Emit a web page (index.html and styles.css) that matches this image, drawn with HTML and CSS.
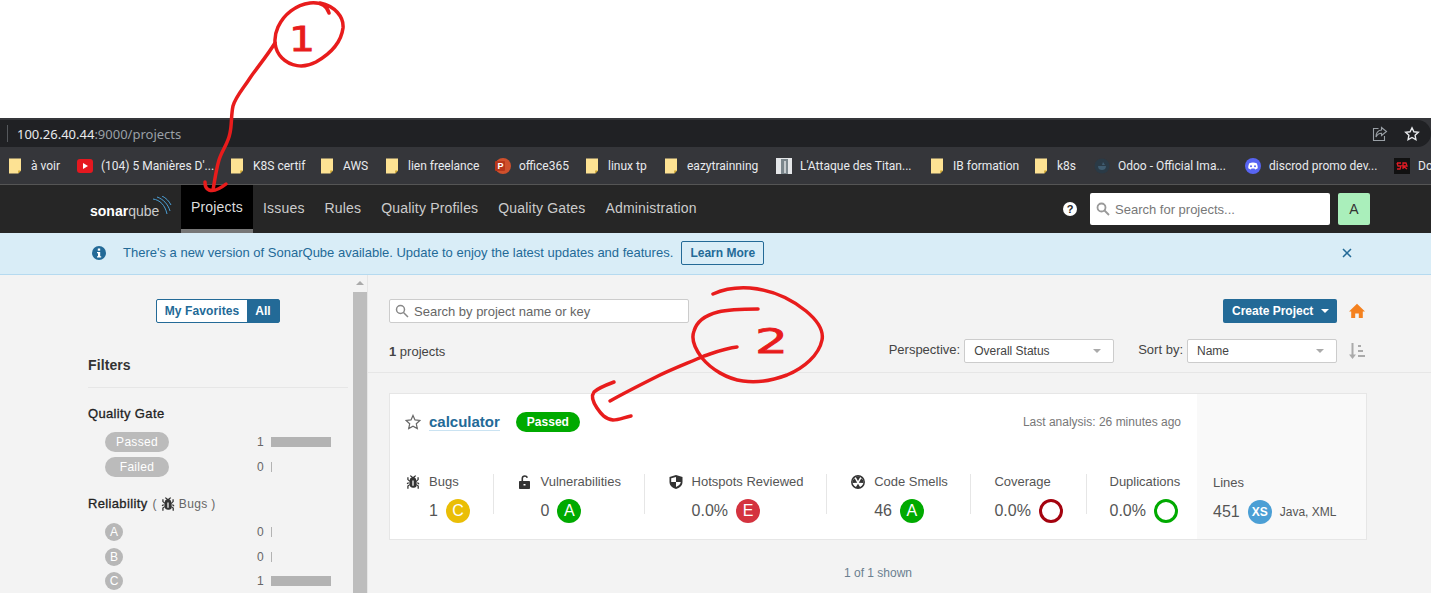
FILE: index.html
```html
<!DOCTYPE html>
<html lang="en">
<head>
  <meta charset="UTF-8">
  <title>Projects - SonarQube</title>
  <link rel="stylesheet" href="styles.css">
</head>
<body>
  <div class="top-blank"></div>

  <div class="browser">
    <div class="url-bar">
      <span class="url-text"><b>100.26.40.44</b>:9000/projects</span>
      <div class="url-actions">
        <svg width="16" height="16" viewBox="0 0 16 16" fill="none" stroke="#9aa0a6" stroke-width="1.1"><path d="M6.5 2.5H1.5v12h11V10"/><path d="M9.5 1.5l5 4-5 4V7.3C7 7.3 5.2 8.5 4 11c0-4 2-6.6 5.5-7z"/></svg>
        <svg width="16" height="16" viewBox="0 0 16 16" fill="none" stroke="#e8eaed" stroke-width="1.4"><path d="M8 1.8l1.9 4 4.4.5-3.2 3 .8 4.4L8 11.5l-3.9 2.2.8-4.4-3.2-3 4.4-.5z"/></svg>
      </div>
    </div>
    <div class="bookmarks">
      <div class="mark"><svg class="folder" viewBox="0 0 13 16"><path d="M0 0h13v13l-3 3H0z" fill="#fde293"/><path d="M13 13h-3v3z" fill="#c9a227"/></svg><span>à voir</span></div>
      <div class="mark"><svg class="fav" viewBox="0 0 16 16"><rect y="1" width="16" height="14" rx="3" fill="#e5181f"/><path d="M6 5l5 3-5 3z" fill="#fff"/></svg><span>(104) 5 Manières D'...</span></div>
      <div class="mark"><svg class="folder" viewBox="0 0 13 16"><path d="M0 0h13v13l-3 3H0z" fill="#fde293"/><path d="M13 13h-3v3z" fill="#c9a227"/></svg><span>K8S certif</span></div>
      <div class="mark"><svg class="folder" viewBox="0 0 13 16"><path d="M0 0h13v13l-3 3H0z" fill="#fde293"/><path d="M13 13h-3v3z" fill="#c9a227"/></svg><span>AWS</span></div>
      <div class="mark"><svg class="folder" viewBox="0 0 13 16"><path d="M0 0h13v13l-3 3H0z" fill="#fde293"/><path d="M13 13h-3v3z" fill="#c9a227"/></svg><span>lien freelance</span></div>
      <div class="mark"><svg class="fav" viewBox="0 0 16 16"><circle cx="8" cy="8" r="8" fill="#d0502c"/><rect y="3" width="10" height="10" rx="1" fill="#b7361a"/><text x="2.4" y="11.4" class="ppt">P</text></svg><span>office365</span></div>
      <div class="mark"><svg class="folder" viewBox="0 0 13 16"><path d="M0 0h13v13l-3 3H0z" fill="#fde293"/><path d="M13 13h-3v3z" fill="#c9a227"/></svg><span>linux tp</span></div>
      <div class="mark"><svg class="folder" viewBox="0 0 13 16"><path d="M0 0h13v13l-3 3H0z" fill="#fde293"/><path d="M13 13h-3v3z" fill="#c9a227"/></svg><span>eazytrainning</span></div>
      <div class="mark"><svg class="fav" viewBox="0 0 16 16"><rect width="16" height="16" fill="#e4e6e8"/><rect x="5" y="1" width="7" height="15" fill="#7b868c"/><rect x="8" y="3" width="2" height="12" fill="#c6cbce"/></svg><span>L'Attaque des Titan...</span></div>
      <div class="mark"><svg class="folder" viewBox="0 0 13 16"><path d="M0 0h13v13l-3 3H0z" fill="#fde293"/><path d="M13 13h-3v3z" fill="#c9a227"/></svg><span>IB formation</span></div>
      <div class="mark"><svg class="folder" viewBox="0 0 13 16"><path d="M0 0h13v13l-3 3H0z" fill="#fde293"/><path d="M13 13h-3v3z" fill="#c9a227"/></svg><span>k8s</span></div>
      <div class="mark"><svg class="fav" viewBox="0 0 16 16"><circle cx="8" cy="8" r="7.5" fill="#2a3a46"/><path d="M4 8h8c0 3-2 4-4 4s-4-1-4-4zM9 4l2 3H8z" fill="#3f5c70"/></svg><span>Odoo - Official Ima...</span></div>
      <div class="mark"><svg class="fav" viewBox="0 0 16 16"><circle cx="8" cy="8" r="8" fill="#5865f2"/><path d="M4.3 5.2c2.4-1 5-1 7.4 0 .8 1.5 1.1 3.2 1 5-.9.7-1.8 1-2.6 1.2l-.6-1H6.5l-.6 1C5.100 11.200 4.200 10.900 3.300 10.200c-.1-1.800.2-3.500 1-5z" fill="#fff"/><circle cx="6" cy="8.300" r="1" fill="#5865f2"/><circle cx="10" cy="8.300" r="1" fill="#5865f2"/></svg><span>discrod promo dev...</span></div>
      <div class="mark"><svg class="fav" viewBox="0 0 16 16"><rect width="16" height="16" fill="#111"/><path d="M3 5h4M3 5l1 3h3l-1 3H3M9 11V5h3l1 3H9l4 3" fill="none" stroke="#e01b24" stroke-width="1.300"/></svg><span>Do</span></div>
    </div>
  </div>

  <header class="nav">
    <a class="logo"><b>sonar</b><span>qube</span>
      <svg class="logo-waves" width="20" height="22" viewBox="0 0 20 22" fill="none" stroke="#4b9fd5" stroke-width="1"><path d="M1 3c7 1 12 6 14 15"/><path d="M5 1c6 2 11 7 13 14"/><path d="M10 0c4 2 7 5 9 9"/></svg>
    </a>
    <nav class="nav-links">
      <a class="nav-link active">Projects</a>
      <a class="nav-link">Issues</a>
      <a class="nav-link">Rules</a>
      <a class="nav-link">Quality Profiles</a>
      <a class="nav-link">Quality Gates</a>
      <a class="nav-link">Administration</a>
    </nav>
    <div class="nav-right">
      <svg width="14" height="14" viewBox="0 0 14 14"><circle cx="7" cy="7" r="7" fill="#fff"/><text x="7" y="11" class="help-mark">?</text></svg>
      <div class="global-search">
        <svg width="14" height="14" viewBox="0 0 14 14" fill="none" stroke="#999" stroke-width="1.800"><circle cx="5.500" cy="5.500" r="4"/><path d="M8.500 8.500l4.500 4.500"/></svg>
        <span>Search for projects...</span>
      </div>
      <div class="avatar">A</div>
    </div>
  </header>

  <div class="banner">
    <svg width="14" height="14" viewBox="0 0 14 14"><circle cx="7" cy="7" r="7" fill="#236a97"/><rect x="5.800" y="2.500" width="2.400" height="2.200" fill="#fff"/><path d="M5 6h3.200v4.200H9.200v1.300H5v-1.300h1V7.300H5z" fill="#fff"/></svg>
    <span class="banner-text">There's a new version of SonarQube available. Update to enjoy the latest updates and features.</span>
    <a class="learn-more">Learn More</a>
    <svg class="banner-close" width="10" height="10" viewBox="0 0 10 10" stroke="#236a97" stroke-width="1.500"><path d="M1 1l8 8M9 1l-8 8"/></svg>
  </div>

  <div class="page">
    <aside class="sidebar">
      <div class="sidebar-inner">
        <div class="toggle">
          <a class="toggle-item">My Favorites</a>
          <a class="toggle-item on">All</a>
        </div>
        <h3 class="filters-title">Filters</h3>

        <h4 class="facet-title">Quality Gate</h4>
        <div class="facet-row">
          <span class="pill-gray">Passed</span>
          <span class="count">1</span><span class="count-bar full"></span>
        </div>
        <div class="facet-row">
          <span class="pill-gray">Failed</span>
          <span class="count">0</span><span class="count-bar"></span>
        </div>

        <h4 class="facet-title second">Reliability <small>( <svg class="icon-inline" width="14" height="14"><use href="#bug"/></svg> Bugs )</small></h4>
        <div class="facet-row rating">
          <span class="circle-gray">A</span>
          <span class="count">0</span><span class="count-bar"></span>
        </div>
        <div class="facet-row rating">
          <span class="circle-gray">B</span>
          <span class="count">0</span><span class="count-bar"></span>
        </div>
        <div class="facet-row rating">
          <span class="circle-gray">C</span>
          <span class="count">1</span><span class="count-bar full"></span>
        </div>
      </div>
      <div class="scrollbar"><i class="scroll-up"></i><div class="scroll-thumb"></div></div>
    </aside>

    <main class="content">
      <div class="toolbar">
        <div class="toolbar-row">
          <div class="project-search">
            <svg width="14" height="14" viewBox="0 0 14 14" fill="none" stroke="#888" stroke-width="1.500"><circle cx="5.500" cy="5.500" r="4"/><path d="M8.500 8.500l4.500 4.500"/></svg>
            <span>Search by project name or key</span>
          </div>
          <div class="toolbar-actions">
            <a class="create-btn">Create Project <i class="caret"></i></a>
            <svg width="16" height="16" viewBox="0 0 16 16"><path d="M8 .8L16 8.600h-2.200V15H9.800v-4.500H6.200V15H2.200V8.600H0z" fill="#f4811f"/></svg>
          </div>
        </div>
        <div class="toolbar-row second">
          <div class="project-count"><b>1</b> projects</div>
          <div class="sorters">
            <label class="select-label">Perspective:</label>
            <div class="select"><span>Overall Status</span><i class="select-arrow"></i></div>
            <label class="select-label sort">Sort by:</label>
            <div class="select"><span>Name</span><i class="select-arrow"></i></div>
            <svg class="sort-icon" width="16" height="16" viewBox="0 0 16 16" fill="#aaa"><path d="M2.500 0h2v11.500H7L3.500 16 0 11.500h2.500z"/><rect x="9" y="2" width="3" height="2"/><rect x="9" y="7" width="5" height="2"/><rect x="9" y="12" width="7" height="2"/></svg>
          </div>
        </div>
      </div>

      <section class="card">
        <div class="card-main">
          <div class="card-head">
            <svg class="star" width="16" height="16" viewBox="0 0 16 16" fill="none" stroke="#666" stroke-width="1.200"><path d="M8 1.400l2 4.500 4.900.6-3.600 3.300 1 4.800L8 12.200l-4.300 2.400 1-4.800L1.100 6.500 6 5.900z"/></svg>
            <a class="project-name">calculator</a>
            <span class="passed">Passed</span>
            <span class="last-analysis">Last analysis: 26 minutes ago</span>
          </div>
          <div class="metrics">
            <div class="metric">
              <svg class="metric-icon" width="14" height="14"><use href="#bug"/></svg>
              <div class="metric-body">
                <div class="metric-label">Bugs</div>
                <div class="metric-value">1 <span class="grade c">C</span></div>
              </div>
            </div>
            <div class="metric">
              <svg class="metric-icon" width="14" height="14" viewBox="0 0 14 14"><path fill-rule="evenodd" fill="#333" d="M2 6h1.500V3.500C3.500 1.500 5 .3 6.800.3c1.500 0 2.700.8 3.200 2.200l-1.500.5C8.200 2.200 7.600 1.800 6.800 1.800 5.800 1.800 5.100 2.500 5.100 3.500V6H11c.6 0 1 .4 1 1v6c0 .6-.4 1-1 1H2c-.6 0-1-.4-1-1V7c0-.6.4-1 1-1zm3.500 3v1.500h2V9z"/></svg>
              <div class="metric-body">
                <div class="metric-label">Vulnerabilities</div>
                <div class="metric-value">0 <span class="grade a">A</span></div>
              </div>
            </div>
            <div class="metric">
              <svg class="metric-icon" width="14" height="14" viewBox="0 0 14 14"><path fill="#333" d="M7 0l6.500 2v5c0 3.500-3 6-6.500 7C3.500 13 .5 10.500.5 7V2z"/><path fill="#fff" d="M7 2v5H2.200V3.300zM7 7h4.800c-.2 2.300-2.400 4-4.800 4.900z"/></svg>
              <div class="metric-body">
                <div class="metric-label">Hotspots Reviewed</div>
                <div class="metric-value">0.0% <span class="grade e">E</span></div>
              </div>
            </div>
            <div class="metric">
              <svg class="metric-icon" width="14" height="14" viewBox="0 0 14 14"><circle cx="7" cy="7" r="6.200" fill="#fff" stroke="#333" stroke-width="1.500"/><path fill="#333" d="M7 6L4.600 1.800c1.500-.8 3.300-.8 4.800 0zM6.200 7.700L1.500 8c-.2-1.900.6-3.700 2.200-4.700zM7.800 7.700L10.300 3.300C11.900 4.300 12.700 6.100 12.500 8zM7 8.800l2.400 3.600c-1.500.7-3.300.7-4.800 0z"/></svg>
              <div class="metric-body">
                <div class="metric-label">Code Smells</div>
                <div class="metric-value">46 <span class="grade a">A</span></div>
              </div>
            </div>
            <div class="metric plain">
              <div class="metric-body">
                <div class="metric-label">Coverage</div>
                <div class="metric-value">0.0% <span class="ring red"></span></div>
              </div>
            </div>
            <div class="metric plain">
              <div class="metric-body">
                <div class="metric-label">Duplications</div>
                <div class="metric-value">0.0% <span class="ring green"></span></div>
              </div>
            </div>
          </div>
        </div>
        <div class="card-side">
          <div class="metric-label">Lines</div>
          <div class="metric-value">451 <span class="grade xs">XS</span><span class="languages">Java, XML</span></div>
        </div>
      </section>

      <div class="shown">1 of 1 shown</div>
    </main>
  </div>

  <!-- hand drawn marks on top of the screenshot -->
  <svg class="scribbles" width="1431" height="593" viewBox="0 0 1431 593">
    <defs>
      <symbol id="bug" viewBox="3 .8 11 13.400" preserveAspectRatio="none"><path fill="#333" d="M11 9h1.300l.5.8.8-.5-.8-1.300H11v-.3l2-2.300V3h-1v2l-1 1.200V5c-.1-.8-.7-1.500-1.400-1.900L11 1.800l-.7-.7-1.800 1.600-1.800-1.600-.7.7 1.500 1.300C6.700 3.500 6.100 4.200 6 5v1.100L5 5V3H4v2.300l2 2.300V8H4.200l-.7 1.200.8.500.4-.7H6v.3l-2 1.900V14h1v-2.400l1-1C6 12 7.100 13 8.400 13h.8c.7 0 1.400-.3 1.800-.9.300-.4.300-.9.200-1.400l.9.9V14h1v-2.800l-2-1.900V9zm-2 2H8V6h1v5z"/></symbol>
    </defs>
    <g fill="none" stroke="#e81c1c" stroke-width="3.500" stroke-linecap="round" stroke-linejoin="round">
      <path d="M329 13C327 6 321 2 310 3C296 5 284 14 278 27C273 38 274 50 282 58C290 66 303 69 316 62C330 54 341 44 343 28C344 17 335 6 320 3"/>
      <path d="M275 43C267 56 256 69 250 78C243 89 236 96 233 106C231 115 232 124 230 133C228 144 222 150 219 160C216 170 215 179 213 190"/>
      <path d="M205 182C205 187 206 189 209 190C215 192 221 188 226 184"/>
      <path d="M713 294C724 289 736 287 750 288C772 290 790 298 806 311C818 321 824 330 822 340C819 355 804 368 787 375C771 381 757 383 743 381C727 379 711 369 702 358C695 349 691 339 694 331C697 321 706 315 718 312C730 309 744 309 758 309"/>
      <path d="M737 347C726 348 716 352 704 356C688 363 672 369 658 376C642 384 626 392 610 401"/>
      <path d="M614 382C606 385 598 388 594 392C591 396 593 402 597 408C601 414 605 419 613 420C619 420 625 417 631 416"/>
    </g>
    <text class="scribble-num" x="289" y="51" textLength="26" lengthAdjust="spacingAndGlyphs">1</text>
    <text class="scribble-num" x="755" y="353" textLength="33" lengthAdjust="spacingAndGlyphs">2</text>
  </svg>
</body>
</html>
```

FILE: styles.css
```css
* {
  box-sizing: border-box;
}

html, body {
  height: 593px;
  overflow: hidden;
}

body {
  margin: 0;
  position: relative;
  background: #fff;
  font-family: "Liberation Sans", Arial, sans-serif;
  font-size: 12px;
  color: #444;
}

.top-blank {
  height: 118px;
  background: #fff;
}

/* browser chrome */
.browser {
  background: #35363a;
  padding-top: 2px;
}

.url-bar {
  height: 27px;
  background: #202124;
  border-radius: 0 14px 14px 0;
  display: flex;
  align-items: center;
  padding-left: 7px;
  padding-right: 11px;
  font-family: "Noto Sans", sans-serif;
  font-size: 13px;
  color: #9aa0a6;
}

.url-text {
  border-left: 1px solid #55585c;
  padding-left: 9px;
  line-height: 16px;
  padding-top: 1px;
}

.url-text b {
  font-weight: 400;
  color: #e8eaed;
}

.url-actions {
  margin-left: auto;
  display: flex;
  gap: 16px;
}

.bookmarks {
  height: 37px;
  padding-left: 9px;
  display: grid;
  grid-template-columns: 68px 154px 90px 65px 109px 91px 79px 111px 155px 104px 59px 151px 149px 40px;
  align-items: center;
  font-family: Roboto, sans-serif;
  font-size: 12px;
  color: #e8eaed;
  white-space: nowrap;
}

.mark {
  display: flex;
  align-items: center;
  gap: 10px;
}

.folder {
  width: 12px;
  height: 16px;
  flex: none;
}

.fav {
  width: 16px;
  height: 16px;
  flex: none;
  margin-right: -2px;
}

.ppt {
  font-family: "Liberation Sans", sans-serif;
  font-size: 9px;
  font-weight: 700;
  fill: #fff;
}

/* sonarqube nav */
.nav {
  height: 49px;
  background: #262626;
  border-top: 1px solid #555;
  display: flex;
  padding-left: 90px;
  padding-right: 61px;
}

.logo {
  width: 81px;
  margin-right: 10px;
  position: relative;
  display: flex;
  align-items: center;
  padding-top: 3px;
  font-size: 14px;
  color: #ccc;
}

.logo b {
  color: #fff;
}

.logo span {
  font-weight: 400;
}

.logo-waves {
  position: absolute;
  right: -1px;
  top: 11px;
}

.nav-links {
  display: flex;
}

.nav-link {
  height: 48px;
  padding: 0 10px;
  display: flex;
  align-items: center;
  font-size: 14px;
  letter-spacing: .18px;
  color: #ccc;
  padding-bottom: 3px;
}

.nav-link.active {
  background: #000;
  color: #ddd;
  border-bottom: 4px solid #777;
  padding-bottom: 0;
}

.nav-right {
  margin-left: auto;
  display: flex;
  align-items: center;
}

.help-mark {
  font-size: 11px;
  font-weight: 700;
  text-anchor: middle;
  fill: #262626;
}

.global-search {
  width: 240px;
  height: 32px;
  margin-left: 13px;
  background: #fff;
  border-radius: 2px;
  display: flex;
  align-items: center;
  gap: 5px;
  padding-left: 6px;
  font-size: 13px;
  color: #777;
}

.avatar {
  width: 32px;
  height: 32px;
  margin-left: 8px;
  background: #aaefbb;
  border-radius: 2px;
  display: flex;
  align-items: center;
  justify-content: center;
  font-size: 14px;
  color: #333;
}

/* update banner */
.banner {
  height: 42px;
  background: #d9edf7;
  border-bottom: 1px solid #b5daf0;
  display: flex;
  align-items: center;
  padding-left: 92px;
  padding-bottom: 2px;
  color: #236a97;
}

.banner-text {
  margin-left: 17px;
  font-size: 13px;
}

.learn-more {
  margin-left: 8px;
  height: 24px;
  width: 83px;
  border: 1px solid #236a97;
  border-radius: 2px;
  display: flex;
  align-items: center;
  justify-content: center;
  font-size: 12px;
  font-weight: 700;
  color: #236a97;
}

.banner-close {
  margin-left: 578px;
}

/* page */
.page {
  display: flex;
  height: 318px;
  background: #f3f3f3;
}

.sidebar {
  width: 368px;
  flex: none;
  display: flex;
  border-right: 1px solid #e6e6e6;
}

.sidebar-inner {
  width: 353px;
  padding: 24px 5px 0 88px;
}

.toggle {
  width: 124px;
  height: 24px;
  margin-left: 68px;
  display: flex;
  border: 1px solid #236a97;
  border-radius: 2px;
  font-size: 12px;
  font-weight: 700;
  color: #236a97;
  background: #fff;
}

.toggle-item {
  flex: 1;
  display: flex;
  align-items: center;
  justify-content: center;
  letter-spacing: .1px;
}

.toggle-item.on {
  flex: 0 0 32px;
  background: #236a97;
  color: #fff;
}

.filters-title {
  margin: 34px 0 0;
  padding-bottom: 14px;
  border-bottom: 1px solid #e6e6e6;
  font-size: 14px;
  line-height: 16px;
  letter-spacing: .1px;
  color: #333;
}

.facet-title {
  margin: 18px 0 10px;
  font-size: 13px;
  line-height: 16px;
  font-weight: 400;
  letter-spacing: .35px;
  color: #222;
  -webkit-text-stroke: .3px #222;
}

.facet-title.second {
  margin-top: 19px;
  margin-bottom: 11px;
  display: flex;
  gap: 5px;
  align-items: center;
}

.facet-title small {
  font-size: 12px;
  color: #666;
  -webkit-text-stroke: 0;
  display: flex;
  align-items: center;
  gap: 4px;
}

.facet-row {
  height: 20px;
  margin-bottom: 5px;
  padding-left: 17px;
  padding-right: 17px;
  display: flex;
  align-items: center;
  color: #666;
}

.facet-row.rating {
  height: 18px;
  margin-bottom: 6.500px;
}

.pill-gray {
  width: 64px;
  height: 20px;
  border-radius: 10px;
  background: #bbb;
  color: #fff;
  display: flex;
  align-items: center;
  justify-content: center;
  letter-spacing: .3px;
}

.circle-gray {
  width: 18px;
  height: 18px;
  border-radius: 50%;
  background: #b7b7b7;
  color: #fff;
  display: flex;
  align-items: center;
  justify-content: center;
  font-size: 12px;
}

.count {
  margin-left: auto;
  width: 14px;
  font-size: 12px;
}

.count-bar {
  width: 60px;
  height: 10px;
  background: linear-gradient(#b3b3b3, #b3b3b3) left / 1px 100% no-repeat;
}

.count-bar.full {
  background: #b3b3b3;
}

.scrollbar {
  width: 14px;
  position: relative;
  padding-top: 17px;
}

.scroll-up {
  display: block;
  position: absolute;
  top: 6px;
  left: 3px;
  border: 4px solid transparent;
  border-top: 0;
  border-bottom: 4px solid #aaa;
}

.scroll-thumb {
  height: 100%;
  background: #bdbdbd;
}

/* projects list */
.content {
  flex: 1;
}

.toolbar {
  height: 98px;
  padding: 24px 66px 0 21px;
  border-bottom: 1px solid #e6e6e6;
  width: 100%;
}

.toolbar-row {
  display: flex;
  align-items: center;
  justify-content: space-between;
  height: 24px;
}

.toolbar-row.second {
  margin-top: 16px;
  height: 24px;
}

.project-search {
  width: 300px;
  height: 24px;
  background: #fff;
  border: 1px solid #ccc;
  border-radius: 2px;
  display: flex;
  align-items: center;
  gap: 5px;
  padding-left: 5px;
  font-size: 13px;
  color: #666;
}

.toolbar-actions {
  display: flex;
  align-items: center;
  gap: 12px;
}

.create-btn {
  width: 114px;
  height: 24px;
  background: #236a97;
  border-radius: 2px;
  color: #fff;
  font-size: 12px;
  font-weight: 700;
  display: flex;
  align-items: center;
  gap: 8px;
  padding-left: 9px;
}

.caret {
  border: 4px solid transparent;
  border-top: 4px solid #fff;
  border-bottom: 0;
}

.project-count {
  font-size: 13px;
  color: #444;
}

.project-count b {
  font-weight: 700;
}

.sorters {
  display: flex;
  align-items: center;
}

.select-label {
  font-size: 13px;
  color: #444;
  margin-right: 4px;
  padding-bottom: 3px;
}

.select-label.sort {
  margin-left: 24px;
}

.select {
  width: 150px;
  height: 24px;
  background: #fff;
  border: 1px solid #ccc;
  border-radius: 2px;
  display: flex;
  align-items: center;
  padding: 0 12px 0 9px;
  font-size: 12px;
  color: #444;
}

.select-arrow {
  margin-left: auto;
  border: 4px solid transparent;
  border-top: 4px solid #aaa;
  border-bottom: 0;
}

.sort-icon {
  margin-left: 12px;
}

.card {
  margin: 20px 64px 0 21px;
  height: 147px;
  background: #fff;
  border: 1px solid #e6e6e6;
  display: flex;
}

.card-main {
  width: 807px;
  padding: 16px 16px 0 15px;
}

.card-head {
  height: 24px;
  display: flex;
  align-items: center;
}

.project-name {
  margin-left: 8px;
  font-size: 15px;
  font-weight: 700;
  color: #236a97;
  border-bottom: 1px solid #cae3f2;
  line-height: 17px;
}

.passed {
  margin-left: 16px;
  width: 64px;
  height: 20px;
  border-radius: 10px;
  background: #00aa00;
  color: #fff;
  font-size: 12px;
  font-weight: 700;
  display: flex;
  align-items: center;
  justify-content: center;
}

.last-analysis {
  margin-left: auto;
  font-size: 12px;
  color: #777;
}

.metrics {
  display: flex;
  margin-top: 40px;
  margin-left: 1px;
}

.metric {
  display: flex;
  gap: 9px;
  height: 40px;
  padding-right: 22.600px;
  padding-left: 24px;
  border-left: 1px solid #e6e6e6;
}

.metric:first-child {
  padding-left: 0;
  border-left: 0;
}

.metric.plain {
  padding-left: 23px;
}

.metric-icon {
  flex: none;
  margin-top: 1px;
}

.metric-label {
  font-size: 13px;
  line-height: 16px;
  color: #555;
  white-space: nowrap;
}

.metric-value {
  margin-top: 9px;
  height: 24px;
  display: flex;
  align-items: center;
  gap: 8px;
  font-size: 16px;
  color: #555;
  white-space: nowrap;
}

.grade {
  width: 24px;
  height: 24px;
  flex: none;
  border-radius: 50%;
  display: flex;
  align-items: center;
  justify-content: center;
  color: #fff;
  font-size: 16px;
}

.grade.a {
  background: #00aa00;
}

.grade.c {
  background: #eabe06;
}

.grade.e {
  background: #d4333f;
}

.grade.xs {
  background: #4b9fd5;
  font-size: 12px;
  font-weight: 700;
}

.ring {
  width: 24px;
  height: 24px;
  flex: none;
  border-radius: 50%;
  border: 3px solid;
}

.ring.red {
  border-color: #a4030f;
}

.ring.green {
  border-color: #00aa00;
}

.card-side {
  flex: 1;
  background: #f9f9f9;
  padding: 81px 0 0 16px;
}

.languages {
  font-size: 12px;
  color: #555;
}

.shown {
  margin-top: 26px;
  margin-right: 43px;
  text-align: center;
  font-size: 12px;
  line-height: 14px;
  color: #6b7f90;
}

/* annotations */
.scribbles {
  position: absolute;
  left: 0;
  top: 0;
  pointer-events: none;
}

.scribble-num {
  font-family: "DejaVu Sans", sans-serif;
  font-size: 33px;
  fill: #e81c1c;
  stroke: #e81c1c;
  stroke-width: .8px;
}
```
